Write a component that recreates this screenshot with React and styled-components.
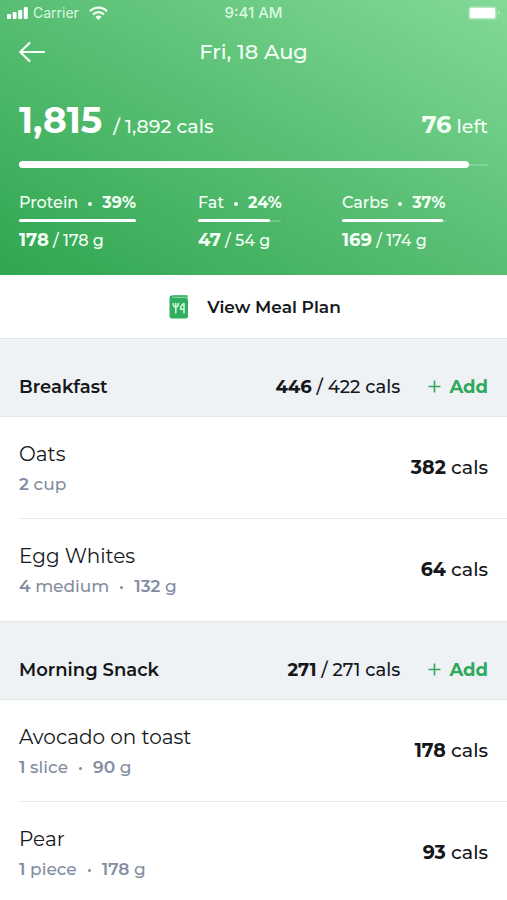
import React from "react";
import styled, { createGlobalStyle } from "styled-components";

const GlobalStyle = createGlobalStyle`
  * { box-sizing: border-box; }
  html { scrollbar-width: none; }
  body {
    margin: 0;
    background: #fff;
    color: #15171a;
    font-family: Montserrat, Inter, sans-serif;
    font-size: 18px;
    font-weight: 500;
    line-height: 24px;
  }
  h1, h2, h3, p, ul { margin: 0; padding: 0; font: inherit; }
  button { border: 0; padding: 0; background: none; color: inherit; font: inherit; cursor: pointer; }
`;

const Header = styled.header`
  padding-bottom: 21px;
  color: #f4fff6;
  background: linear-gradient(to top right, #30a650, #58be73 50%, #82da97);
`;

const StatusBar = styled.div`
  display: grid;
  grid-template-columns: 1fr auto 1fr;
  align-items: center;
  height: 26px;
  padding: 0 7px;
  font-family: Inter, sans-serif;
  font-size: 14px;
  font-weight: 400;
  line-height: 16px;
  color: #dcf8e2;
`;

const Signal = styled.div`
  display: flex;
  align-items: center;
  gap: 5px;
  svg:last-child { margin-left: 5px; }
`;

const Clock = styled.span`
  font-size: 15px;
  font-weight: 500;
`;

const Battery = styled.svg`
  justify-self: end;
`;

const NavBar = styled.nav`
  display: grid;
  grid-template-columns: 1fr auto 1fr;
  align-items: center;
  height: 52px;
  padding: 0 19px;
`;

const BackButton = styled.button`
  display: flex;
  justify-self: start;
`;

const Title = styled.h1`
  && { font-size: 21px; font-weight: 500; }
`;

const Totals = styled.div`
  display: flex;
  justify-content: space-between;
  align-items: baseline;
  padding: 20px 19px 0;
  font-size: 19px;
  line-height: 44px;
`;

const Eaten = styled.strong`
  margin-right: 11px;
  color: #fff;
  font-size: 36px;
  font-weight: 700;
`;

const Remaining = styled.strong`
  font-size: 24px;
  font-weight: 700;
`;

const Track = styled.div`
  display: flex;
  align-items: center;
  height: ${(p) => (p.$thick ? 7 : 3)}px;
  width: ${(p) => (p.$length ? `${p.$length}px` : "auto")};
  margin: ${(p) => (p.$thick ? "12px 19px 0" : "6px 0 5px")};
  border-radius: 4px;
  background: linear-gradient(#ffffff33, #ffffff33) center / 100% 2px no-repeat;
`;

const Fill = styled.div`
  height: 100%;
  border-radius: 4px;
  background: #fff;
`;

const Macros = styled.div`
  display: grid;
  grid-template-columns: 179fr 144fr 146fr;
  padding: 25px 19px 0;
  font-size: 16px;
  line-height: 20px;
`;

const MacroAmount = styled.p`
  line-height: 26px;
  strong { font-size: 18px; }
`;

const Strong = styled.strong`
  font-weight: ${(p) => (p.$heavy ? 700 : 600)};
`;

const Dot = styled.span`
  display: inline-block;
  width: 4px;
  height: 4px;
  margin: 0 10px;
  border-radius: 50%;
  background: currentColor;
  vertical-align: middle;
`;

const MealPlanButton = styled.button`
  display: flex;
  align-items: center;
  justify-content: center;
  gap: 18px;
  width: 100%;
  height: 63px;
  padding-left: 3px;
  font-size: 17px;
  font-weight: 600;
`;

const MealHeader = styled.div`
  display: flex;
  align-items: center;
  height: 79px;
  padding: 18px 19px 0;
  border: solid #e2e7ea;
  border-width: 1px 0;
  background: #eef2f5;
`;

const MealName = styled.h2`
  && { flex: 1; font-weight: 600; }
`;

const AddButton = styled.button`
  display: flex;
  align-items: center;
  gap: 8px;
  margin-left: 28px;
  color: #2fa95c;
  font-weight: 700;
`;

const FoodList = styled.ul`
  list-style: none;
  padding-left: 19px;
`;

const FoodRow = styled.li`
  display: flex;
  align-items: center;
  justify-content: space-between;
  height: 101px;
  padding-right: 19px;
  & + & {
    height: 103px;
    border-top: 1px solid #e6e9ec;
  }
`;

const FoodName = styled.h3`
  && { font-size: 20px; font-weight: 400; line-height: 28px; }
`;

const Portion = styled.p`
  padding-top: 4px;
  color: #838da1;
  font-size: 17px;
`;

const SmallDot = styled(Dot)`
  width: 3px;
  height: 3px;
  margin: 0 11px;
`;

const Calories = styled.p`
  font-size: 19px;
`;

const macros = [
  { name: "Protein", share: "39%", eaten: 178, goal: 178, length: 117 },
  { name: "Fat", share: "24%", eaten: 47, goal: 54, length: 83 },
  { name: "Carbs", share: "37%", eaten: 169, goal: 174, length: 104 },
];

const meals = [
  {
    name: "Breakfast", eaten: 446, goal: 422,
    foods: [
      { name: "Oats", count: 2, unit: "cup", cals: 382 },
      { name: "Egg Whites", count: 4, unit: "medium", grams: 132, cals: 64 },
    ],
  },
  {
    name: "Morning Snack", eaten: 271, goal: 271,
    foods: [
      { name: "Avocado on toast", count: 1, unit: "slice", grams: 90, cals: 178 },
      { name: "Pear", count: 1, unit: "piece", grams: 178, cals: 93 },
    ],
  },
];

function Progress({ label, value, max, thick, length }) {
  return (
    <Track $thick={thick} $length={length} role="progressbar" aria-label={label} aria-valuenow={value} aria-valuemax={max}>
      <Fill style={{ width: `${(value / max) * 100}%` }} />
    </Track>
  );
}

function Meal({ meal }) {
  return (
    <section>
      <MealHeader>
        <MealName>{meal.name}</MealName>
        <p><Strong $heavy>{meal.eaten}</Strong> / {meal.goal} cals</p>
        <AddButton>
          <svg width="13" height="13" viewBox="0 0 13 13" stroke="currentColor" strokeWidth="1.6" aria-hidden="true">
            <path d="M6.5 .5v12M.5 6.5h12" />
          </svg>
          Add
        </AddButton>
      </MealHeader>
      <FoodList>
        {meal.foods.map((food) => (
          <FoodRow key={food.name}>
            <div>
              <FoodName>{food.name}</FoodName>
              <Portion>
                <Strong>{food.count}</Strong> {food.unit}
                {food.grams && <><SmallDot /><Strong>{food.grams}</Strong> g</>}
              </Portion>
            </div>
            <Calories><Strong $heavy>{food.cals}</Strong> cals</Calories>
          </FoodRow>
        ))}
      </FoodList>
    </section>
  );
}

export default function App() {
  return (
    <>
      <GlobalStyle />
      <Header>
        <StatusBar>
          <Signal>
            <svg width="21" height="12" viewBox="0 0 21 12" fill="#fff" aria-hidden="true">
              <rect x="0" y="7" width="4" height="5" rx="1" />
              <rect x="5.6" y="5" width="4" height="7" rx="1" />
              <rect x="11.2" y="3" width="4" height="9" rx="1" />
              <rect x="16.8" y="0" width="4" height="12" rx="1" />
            </svg>
            Carrier
            <svg width="19" height="14" viewBox="0 0 19 14" fill="none" stroke="#f2fff4" strokeWidth="2.3" aria-hidden="true">
              <path d="M1 5.2a12 12 0 0 1 17 0M4 8.4a7.8 7.8 0 0 1 11 0" />
              <path d="M6.4 10.8a4.4 4.4 0 0 1 6.2 0L9.5 14z" fill="#f2fff4" stroke="none" />
            </svg>
          </Signal>
          <Clock>9:41 AM</Clock>
          <Battery width="32" height="14" viewBox="0 0 32 14" aria-hidden="true">
            <rect x=".5" y=".5" width="28" height="13" rx="3" fill="#b4eabf" stroke="#9be0a9" />
            <rect x="2" y="2" width="25" height="10" rx="1.5" fill="#fff" />
            <path d="M30 5a2 2 0 0 1 0 4z" fill="#a8e5b4" />
          </Battery>
        </StatusBar>
        <NavBar>
          <BackButton aria-label="Back">
            <svg width="26" height="20" viewBox="0 0 26 20" fill="none" stroke="#f4fff6" strokeWidth="2.2" strokeLinecap="round" strokeLinejoin="round" aria-hidden="true">
              <path d="M25 10H1.2M10.5 1 1.2 10l9.3 9" />
            </svg>
          </BackButton>
          <Title>Fri, 18 Aug</Title>
        </NavBar>
        <Totals>
          <p><Eaten>1,815</Eaten>/ 1,892 cals</p>
          <p><Remaining>76</Remaining> left</p>
        </Totals>
        <Progress thick label="Calories" value={1815} max={1892} />
        <Macros>
          {macros.map((m) => (
            <div key={m.name}>
              <p>{m.name}<Dot /><Strong $heavy>{m.share}</Strong></p>
              <Progress label={m.name} value={m.eaten} max={m.goal} length={m.length} />
              <MacroAmount><Strong $heavy>{m.eaten}</Strong> / {m.goal} g</MacroAmount>
            </div>
          ))}
        </Macros>
      </Header>
      <main>
        <MealPlanButton>
          <svg width="20" height="24" viewBox="0 0 20 24" fill="none" aria-hidden="true">
            <path d="M3.5 0H18a1 1 0 0 1 1 1v2H4" fill="#7fd09a" />
            <path d="M.5 3.2C.5 1 1.6.5 3.5.5H18v1.2H4.2c-1 0-1 1.3 0 1.3H17a2 2 0 0 1 2 2v16a2.5 2.5 0 0 1-2.5 2.5H3a2.5 2.5 0 0 1-2.5-2.5z" fill="#2fae60" />
            <path d="M4.2 8.5c0 2 .8 3.5 2.600 3.5s2.600-1.500 2.600-3.500M6.800 8.500V18M15 18V8.500c-2 1-3.500 3.500-3.500 5.700H15" stroke="#d8f8e2" strokeWidth="1.5" strokeLinecap="round" strokeLinejoin="round" />
          </svg>
          View Meal Plan
        </MealPlanButton>
        {meals.map((meal) => <Meal key={meal.name} meal={meal} />)}
      </main>
    </>
  );
}
